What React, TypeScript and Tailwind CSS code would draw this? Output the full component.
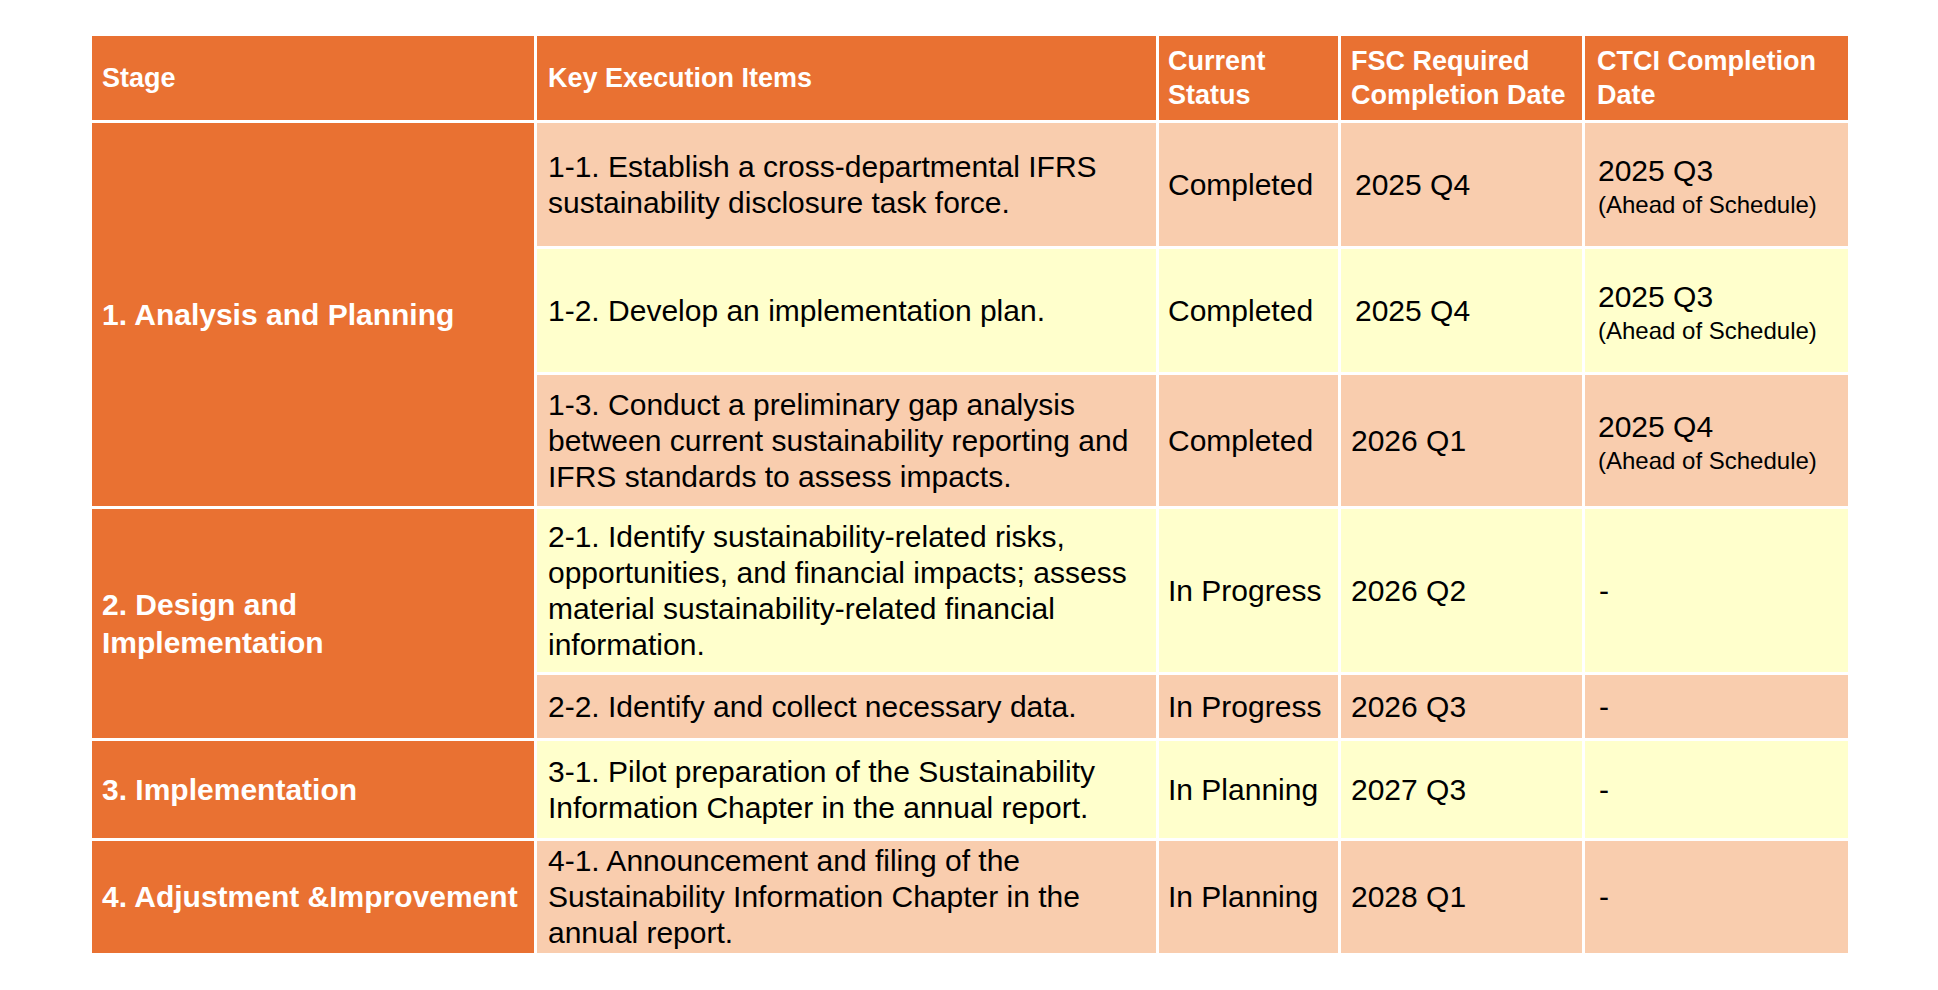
import React from "react";

const ORANGE = "bg-[#e97132]";

function Head({ lines, pl = "pl-[10px]" }: { lines: string[]; pl?: string }) {
  return (
    <div className={`${ORANGE} flex flex-col justify-center ${pl} text-white font-bold text-[27px] leading-[34px] whitespace-nowrap`}>
      {lines.map((l, i) => (
        <span key={i}>{l}</span>
      ))}
    </div>
  );
}

function Stage({ lines, span }: { lines: string[]; span: string }) {
  return (
    <div className={`${ORANGE} ${span} flex flex-col justify-center pl-[10px] text-white font-bold text-[30px] leading-[38px] whitespace-nowrap`}>
      {lines.map((l, i) => (
        <span key={i}>{l}</span>
      ))}
    </div>
  );
}

function Cell({
  lines,
  bg,
  pl = "pl-[11px]",
  sub,
}: {
  lines: string[];
  bg: string;
  pl?: string;
  sub?: string;
}) {
  return (
    <div className={`${bg} flex flex-col justify-center ${pl} ${sub ? "pt-[4px]" : ""} text-black text-[30px] leading-[36px] whitespace-nowrap`}>
      {lines.map((l, i) => (
        <span key={i}>{l}</span>
      ))}
      {sub && <span className="text-[24px] leading-[32px]">{sub}</span>}
    </div>
  );
}

const PEACH = "bg-[#f9cdae]";
const YELLOW = "bg-[#ffffcc]";

export default function App() {
  return (
    <div
      className="w-[1938px] h-[990px] bg-white pt-[36px] pl-[92px]"
      style={{ fontFamily: '"Liberation Sans", Arial, sans-serif' }}
    >
      <div className="grid w-[1756px] gap-[3px] bg-white grid-cols-[442px_619px_179px_241px_263px] grid-rows-[84px_123px_123px_131px_163px_63px_97px_112px]">
        <Head lines={["Stage"]} />
        <Head lines={["Key Execution Items"]} pl="pl-[11px]" />
        <Head lines={["Current", "Status"]} pl="pl-[9px]" />
        <Head lines={["FSC Required", "Completion Date"]} pl="pl-[10px]" />
        <Head lines={["CTCI Completion", "Date"]} pl="pl-[12px]" />

        <Stage lines={["1. Analysis and Planning"]} span="row-span-3" />
        <Cell bg={PEACH} lines={["1-1. Establish a cross-departmental IFRS", "sustainability disclosure task force."]} />
        <Cell bg={PEACH} pl="pl-[9px]" lines={["Completed"]} />
        <Cell bg={PEACH} pl="pl-[14px]" lines={["2025 Q4"]} />
        <Cell bg={PEACH} pl="pl-[13px]" lines={["2025 Q3"]} sub="(Ahead of Schedule)" />

        <Cell bg={YELLOW} lines={["1-2. Develop an implementation plan."]} />
        <Cell bg={YELLOW} pl="pl-[9px]" lines={["Completed"]} />
        <Cell bg={YELLOW} pl="pl-[14px]" lines={["2025 Q4"]} />
        <Cell bg={YELLOW} pl="pl-[13px]" lines={["2025 Q3"]} sub="(Ahead of Schedule)" />

        <Cell
          bg={PEACH}
          lines={[
            "1-3. Conduct a preliminary gap analysis",
            "between current sustainability reporting and",
            "IFRS standards to assess impacts.",
          ]}
        />
        <Cell bg={PEACH} pl="pl-[9px]" lines={["Completed"]} />
        <Cell bg={PEACH} pl="pl-[10px]" lines={["2026 Q1"]} />
        <Cell bg={PEACH} pl="pl-[13px]" lines={["2025 Q4"]} sub="(Ahead of Schedule)" />

        <Stage lines={["2. Design and", "Implementation"]} span="row-span-2" />
        <Cell
          bg={YELLOW}
          lines={[
            "2-1. Identify sustainability-related risks,",
            "opportunities, and financial impacts; assess",
            "material sustainability-related financial",
            "information.",
          ]}
        />
        <Cell bg={YELLOW} pl="pl-[9px]" lines={["In Progress"]} />
        <Cell bg={YELLOW} pl="pl-[10px]" lines={["2026 Q2"]} />
        <Cell bg={YELLOW} pl="pl-[14px]" lines={["-"]} />

        <Cell bg={PEACH} lines={["2-2. Identify and collect necessary data."]} />
        <Cell bg={PEACH} pl="pl-[9px]" lines={["In Progress"]} />
        <Cell bg={PEACH} pl="pl-[10px]" lines={["2026 Q3"]} />
        <Cell bg={PEACH} pl="pl-[14px]" lines={["-"]} />

        <Stage lines={["3. Implementation"]} span="" />
        <Cell
          bg={YELLOW}
          lines={["3-1. Pilot preparation of the Sustainability", "Information Chapter in the annual report."]}
        />
        <Cell bg={YELLOW} pl="pl-[9px]" lines={["In Planning"]} />
        <Cell bg={YELLOW} pl="pl-[10px]" lines={["2027 Q3"]} />
        <Cell bg={YELLOW} pl="pl-[14px]" lines={["-"]} />

        <Stage lines={["4. Adjustment &Improvement"]} span="" />
        <Cell
          bg={PEACH}
          lines={["4-1. Announcement and filing of the", "Sustainability Information Chapter in the", "annual report."]}
        />
        <Cell bg={PEACH} pl="pl-[9px]" lines={["In Planning"]} />
        <Cell bg={PEACH} pl="pl-[10px]" lines={["2028 Q1"]} />
        <Cell bg={PEACH} pl="pl-[14px]" lines={["-"]} />
      </div>
    </div>
  );
}
